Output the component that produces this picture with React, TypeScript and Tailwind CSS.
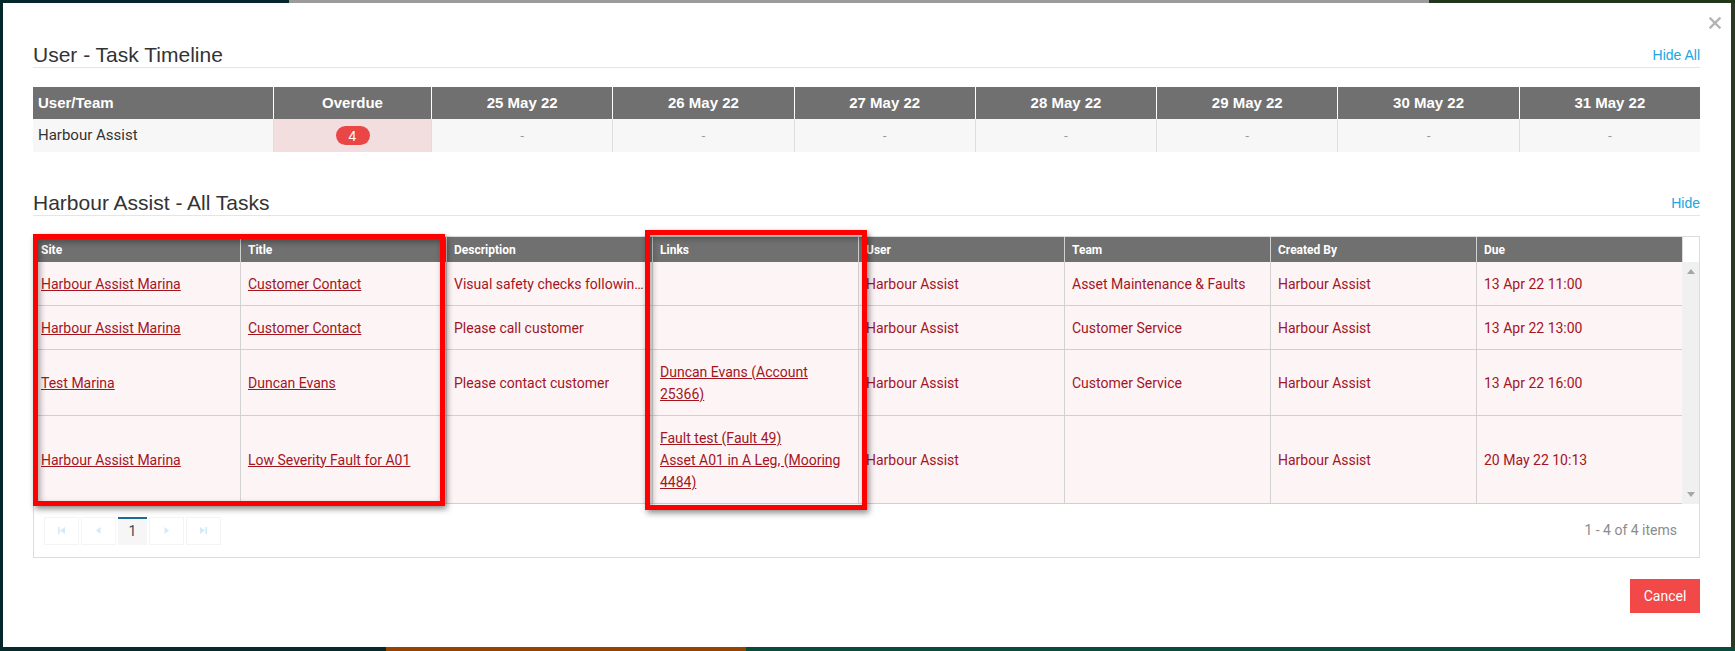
import React from 'react';

const dates = ['25 May 22', '26 May 22', '27 May 22', '28 May 22', '29 May 22', '30 May 22', '31 May 22'];

const columns = ['Site', 'Title', 'Description', 'Links', 'User', 'Team', 'Created By', 'Due'];

type Task = {
  site: string;
  title: string;
  description: string;
  links: string[];
  user: string;
  team: string;
  createdBy: string;
  due: string;
  height: string;
};

const tasks: Task[] = [
  {
    site: 'Harbour Assist Marina',
    title: 'Customer Contact',
    description: 'Visual safety checks following storm damage',
    links: [],
    user: 'Harbour Assist',
    team: 'Asset Maintenance & Faults',
    createdBy: 'Harbour Assist',
    due: '13 Apr 22 11:00',
    height: 'h-[44px]',
  },
  {
    site: 'Harbour Assist Marina',
    title: 'Customer Contact',
    description: 'Please call customer',
    links: [],
    user: 'Harbour Assist',
    team: 'Customer Service',
    createdBy: 'Harbour Assist',
    due: '13 Apr 22 13:00',
    height: 'h-[44px]',
  },
  {
    site: 'Test Marina',
    title: 'Duncan Evans',
    description: 'Please contact customer',
    links: ['Duncan Evans (Account 25366)'],
    user: 'Harbour Assist',
    team: 'Customer Service',
    createdBy: 'Harbour Assist',
    due: '13 Apr 22 16:00',
    height: 'h-[66px]',
  },
  {
    site: 'Harbour Assist Marina',
    title: 'Low Severity Fault for A01',
    description: '',
    links: ['Fault test (Fault 49)', 'Asset A01 in A Leg, (Mooring 4484)'],
    user: 'Harbour Assist',
    team: '',
    createdBy: 'Harbour Assist',
    due: '20 May 22 10:13',
    height: 'h-[88px]',
  },
];

function CloseIcon() {
  return (
    <svg width="12" height="12" viewBox="0 0 12 12">
      <path d="M1.5 1.5 L10.5 10.5 M10.5 1.5 L1.5 10.5" stroke="#b3b3b3" strokeWidth="2.4" strokeLinecap="square" />
    </svg>
  );
}

function PagerIcon({ kind }: { kind: 'first' | 'prev' | 'next' | 'last' }) {
  const c = '#d3ebf8';
  return (
    <svg width="9" height="9" viewBox="0 0 9 9">
      {kind === 'first' && (
        <>
          <rect x="1" y="1" width="1.6" height="7" fill={c} />
          <path d="M8 1 L3 4.5 L8 8 Z" fill={c} />
        </>
      )}
      {kind === 'prev' && <path d="M6.5 1 L2 4.5 L6.5 8 Z" fill={c} />}
      {kind === 'next' && <path d="M2.5 1 L7 4.5 L2.5 8 Z" fill={c} />}
      {kind === 'last' && (
        <>
          <path d="M1 1 L6 4.5 L1 8 Z" fill={c} />
          <rect x="6.4" y="1" width="1.6" height="7" fill={c} />
        </>
      )}
    </svg>
  );
}

function SectionHeader({ title, action }: { title: string; action: string }) {
  return (
    <div className="flex h-[25px] items-end justify-between border-b border-[#e5e5e5]">
      <h2 className="font-['Liberation_Sans',Arial,sans-serif] text-[21px] leading-[24px] text-[#333]">{title}</h2>
      <a className="pb-[2px] font-['Liberation_Sans',Arial,sans-serif] text-[14px] leading-[20px] text-[#20a6e2]">
        {action}
      </a>
    </div>
  );
}

function Timeline() {
  return (
    <div className="mt-[19px] font-['Liberation_Sans',Arial,sans-serif]">
      <div className="grid h-[32px] grid-cols-[240px_158px_repeat(7,1fr)] bg-[#707070] text-[15px] font-bold text-white">
        <div className="flex items-center pl-[5px]">User/Team</div>
        <div className="flex items-center justify-center border-l border-white">Overdue</div>
        {dates.map((d) => (
          <div key={d} className="flex items-center justify-center border-l border-white">
            {d}
          </div>
        ))}
      </div>
      <div className="grid h-[33px] grid-cols-[240px_158px_repeat(7,1fr)] bg-[#f7f7f7] text-[15px]">
        <div className="flex items-center pl-[5px] font-['Roboto',sans-serif] text-[#333]">Harbour Assist</div>
        <div className="flex items-center justify-center border-l border-[#dedede] bg-[#f2dede]">
          <span className="flex h-[19px] w-[34px] items-center justify-center rounded-full bg-[#ea4646] text-[14px] leading-none text-white">
            4
          </span>
        </div>
        {dates.map((d) => (
          <div key={d} className="flex items-center justify-center border-l border-[#dedede] text-[13px] text-[#9a9a9a]">
            -
          </div>
        ))}
      </div>
    </div>
  );
}

function Cell({ children, first }: { children?: React.ReactNode; first?: boolean }) {
  return (
    <div className={`flex min-w-0 items-center px-[7px] ${first ? '' : 'border-l border-[#d2d2d2]'}`}>
      {children}
    </div>
  );
}

function TaskGrid() {
  return (
    <div className="relative mt-[20px] border border-[#dcdcdc] font-['Roboto',sans-serif]">
      <div className="grid h-[25px] grid-cols-[repeat(8,206px)_1fr] text-[12px] font-bold text-white">
        {columns.map((c, i) => (
          <div
            key={c}
            className={`flex items-center bg-[#707070] px-[7px] ${i === 0 ? '' : 'border-l border-[#d0d0d0]'}`}
          >
            {c}
          </div>
        ))}
        <div className="border-l border-[#dcdcdc] bg-white" />
      </div>
      <div className="flex">
        <div className="w-[1648px]">
          {tasks.map((t, i) => (
            <div
              key={i}
              className={`grid ${t.height} grid-cols-[repeat(8,206px)] border-b border-[#d0d0d0] bg-[#fdf4f5] text-[14px] leading-[22px] text-[#a3151f]`}
            >
              <Cell first>
                <a className="underline">{t.site}</a>
              </Cell>
              <Cell>
                <a className="underline">{t.title}</a>
              </Cell>
              <Cell>
                <span className="truncate">{t.description}</span>
              </Cell>
              <Cell>
                <div className="flex flex-col">
                  {t.links.map((l) => (
                    <a key={l} className="underline">
                      {l}
                    </a>
                  ))}
                </div>
              </Cell>
              <Cell>{t.user}</Cell>
              <Cell>{t.team}</Cell>
              <Cell>{t.createdBy}</Cell>
              <Cell>{t.due}</Cell>
            </div>
          ))}
        </div>
        <div className="flex flex-1 flex-col items-center justify-between bg-[#f0f0f0] py-[7px]">
          <svg width="8" height="5" viewBox="0 0 8 5">
            <path d="M0 5 L4 0 L8 5 Z" fill="#a6a6a6" />
          </svg>
          <svg width="8" height="5" viewBox="0 0 8 5">
            <path d="M0 0 L4 5 L8 0 Z" fill="#a6a6a6" />
          </svg>
        </div>
      </div>
      <div className="flex h-[53px] items-center justify-between pl-[10px] pr-[22px]">
        <div className="flex gap-[2px]">
          <button className="flex h-[28px] w-[35px] items-center justify-center border border-[#f4f4f4]">
            <PagerIcon kind="first" />
          </button>
          <button className="flex h-[28px] w-[35px] items-center justify-center border border-[#f4f4f4]">
            <PagerIcon kind="prev" />
          </button>
          <button className="flex h-[28px] w-[29px] items-center justify-center border-t-2 border-[#1d6a94] bg-[#f6f6f6] text-[14px] text-[#3a4a58]">
            1
          </button>
          <button className="flex h-[28px] w-[35px] items-center justify-center border border-[#f4f4f4]">
            <PagerIcon kind="next" />
          </button>
          <button className="flex h-[28px] w-[35px] items-center justify-center border border-[#f4f4f4]">
            <PagerIcon kind="last" />
          </button>
        </div>
        <span className="text-[14px] text-[#8c8c8c]">1 - 4 of 4 items</span>
      </div>

      {/* annotation boxes over the grid */}
      <div className="pointer-events-none absolute left-[-1px] top-[-3px] h-[272px] w-[412px] border-[5px] border-[#ff0000] shadow-[2px_3px_6px_rgba(0,0,0,0.45),inset_2px_3px_6px_rgba(0,0,0,0.35)]" />
      <div className="pointer-events-none absolute left-[611px] top-[-7px] h-[280px] w-[222px] border-[5px] border-[#ff0000] shadow-[2px_3px_6px_rgba(0,0,0,0.45),inset_2px_3px_6px_rgba(0,0,0,0.35)]" />
    </div>
  );
}

export default function App() {
  return (
    <div className="flex h-[651px] w-[1735px] flex-col overflow-hidden bg-[#05262b]">
      <div className="flex h-[3px]">
        <div className="w-[289px] bg-[#05262b]" />
        <div className="w-[1140px] bg-[#9b9b9b]" />
        <div className="flex-1 bg-[#22361c]" />
      </div>
      <div className="flex flex-1">
        <div className="w-[3px] bg-[#05262b]" />
        <div className="relative flex w-[1728px] flex-col bg-white pl-[30px] pr-[31px] pt-[40px]">
          <button className="absolute right-[10px] top-[14px]">
            <CloseIcon />
          </button>
          <SectionHeader title="User - Task Timeline" action="Hide All" />
          <Timeline />
          <div className="mt-[39px]">
            <SectionHeader title="Harbour Assist - All Tasks" action="Hide" />
          </div>
          <TaskGrid />
          <div className="mt-[21px] flex justify-end">
            <button className="h-[34px] w-[70px] bg-[#f24848] font-['Roboto',sans-serif] text-[14px] text-white">
              Cancel
            </button>
          </div>
        </div>
        <div className="flex-1 bg-[#2b3a22]" />
      </div>
      <div className="flex h-[4px]">
        <div className="w-[386px] bg-[#062a2c]" />
        <div className="w-[360px] bg-[#974300]" />
        <div className="flex-1 bg-[#0c4a3c]" />
      </div>
    </div>
  );
}
